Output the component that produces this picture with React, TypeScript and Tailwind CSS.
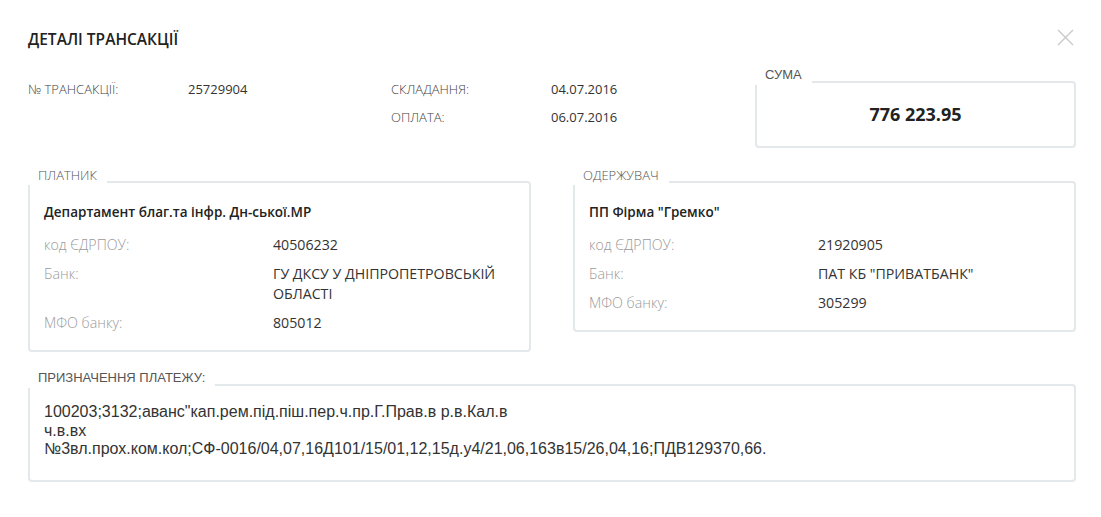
import React from "react";

const OS = "font-['Open_Sans','Noto_Sans',sans-serif]";
const AR = "font-['Liberation_Sans',Arial,sans-serif]";

function Legend({ text, arial }: { text: string; arial?: boolean }) {
  return (
    <div
      className={`absolute left-[-2px] top-[-17px] h-[19px] bg-white px-[10px] text-[13px] leading-[18px] text-[#555] ${
        arial ? AR : OS + " font-light"
      }`}
    >
      {text}
    </div>
  );
}

function Row({ label, children }: { label: string; children: React.ReactNode }) {
  return (
    <div className="grid grid-cols-[229px_1fr] text-[14.2px] leading-[20px]">
      <div className="font-light text-[#9a9a9a]">{label}</div>
      <div className="text-[#333]">{children}</div>
    </div>
  );
}

function Party({
  title,
  name,
  code,
  bank,
  mfo,
}: {
  title: string;
  name: string;
  code: string;
  bank: React.ReactNode;
  mfo: string;
}) {
  return (
    <div className="relative rounded-[4px] border-2 border-[#e3e8eb] px-[14px] pb-[17px] pt-[19px]">
      <Legend text={title} />
      <div className="mb-[13px] text-[13.5px] font-semibold leading-[20px] text-[#222]">{name}</div>
      <div className="flex flex-col gap-[9px]">
        <Row label="код ЄДРПОУ:">{code}</Row>
        <Row label="Банк:">{bank}</Row>
        <Row label="МФО банку:">{mfo}</Row>
      </div>
    </div>
  );
}

export default function App() {
  return (
    <div className={`relative h-[517px] w-[1101px] bg-white pl-[28px] pr-[25px] pt-[29px] ${OS}`}>
      <button className="absolute left-[1057px] top-[29px] h-[17px] w-[17px]" aria-label="close">
        <svg viewBox="0 0 17 17" width="17" height="17">
          <path d="M1 1 L16 16 M16 1 L1 16" stroke="#c9c9c9" strokeWidth="1.4" fill="none" />
        </svg>
      </button>

      <h1 className="h-[20px] text-[15.5px] font-semibold leading-[20px] text-[#222]">ДЕТАЛІ ТРАНСАКЦІЇ</h1>

      <div className="mt-[30px] flex items-start">
        <div className="grid w-[727px] grid-cols-[160px_203px_160px_1fr] gap-y-[8px] text-[13px] leading-[20px]">
          <div className="font-light text-[#444]">№ ТРАНСАКЦІЇ:</div>
          <div className="text-[#333]">25729904</div>
          <div className="font-light text-[#444]">СКЛАДАННЯ:</div>
          <div className="text-[#333]">04.07.2016</div>
          <div />
          <div />
          <div className="font-light text-[#444]">ОПЛАТА:</div>
          <div className="text-[#333]">06.07.2016</div>
        </div>
        <div className="relative mt-[2px] flex h-[67px] w-[321px] items-center justify-center rounded-[4px] border-2 border-[#e3e8eb]">
          <Legend text="СУМА" arial />
          <span className="text-[18px] font-bold text-[#222]">776 223.95</span>
        </div>
      </div>

      <div className="mt-[33px] grid grid-cols-2 items-start gap-x-[42px]">
        <Party
          title="ПЛАТНИК"
          name="Департамент благ.та інфр. Дн-ської.МР"
          code="40506232"
          bank={
            <>
              ГУ ДКСУ У ДНІПРОПЕТРОВСЬКІЙ
              <br />
              ОБЛАСТІ
            </>
          }
          mfo="805012"
        />
        <Party
          title="ОДЕРЖУВАЧ"
          name='ПП Фірма "Гремко"'
          code="21920905"
          bank='ПАТ КБ "ПРИВАТБАНК"'
          mfo="305299"
        />
      </div>

      <div className="relative mt-[32px] rounded-[4px] border-2 border-[#e3e8eb] px-[14px] pb-[21px] pt-[17px]">
        <Legend text="ПРИЗНАЧЕННЯ ПЛАТЕЖУ:" arial />
        <div className={`${AR} text-[16px] leading-[18.5px] text-[#333]`}>
          100203;3132;аванс"кап.рем.під.піш.пер.ч.пр.Г.Прав.в р.в.Кал.в
          <br />
          ч.в.вх
          <br />
          №3вл.прох.ком.кол;СФ-0016/04,07,16Д101/15/01,12,15д.у4/21,06,163в15/26,04,16;ПДВ129370,66.
        </div>
      </div>
    </div>
  );
}
